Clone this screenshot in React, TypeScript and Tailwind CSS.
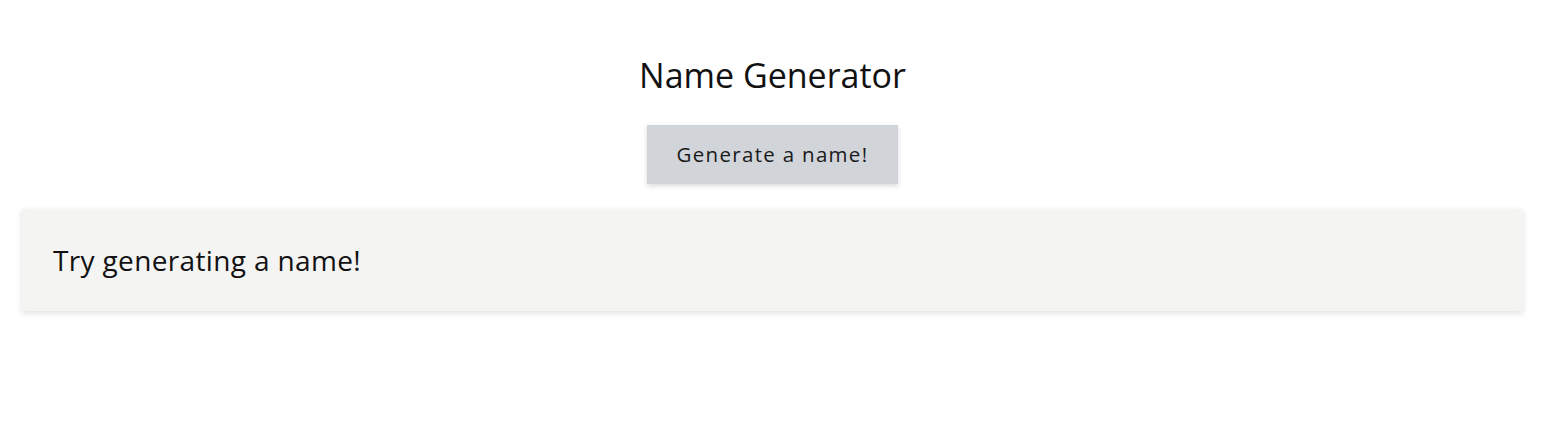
export default function App() {
  return (
    <div className="w-full min-h-[428px] bg-white" style={{ fontFamily: '"Open Sans", sans-serif' }}>
      <div className="mr-[21px] px-[22px] pt-[53px] flex flex-col items-center">
        <h1 className="text-[34px] leading-[44px] text-[#111] font-normal">Name Generator</h1>
        <button className="mt-[28px] w-[251px] h-[59px] bg-[#d1d4d9] text-[20.5px] font-medium tracking-[1.3px] text-[#1a1a1a] shadow-[0_2px_5px_rgba(0,0,0,0.15)]">
          Generate a name!
        </button>
        <div className="mt-[25px] w-full h-[102px] bg-[#f4f4f3] shadow-[0_2px_6px_rgba(0,0,0,0.13)] flex items-center px-[31px]">
          <p className="text-[28px] tracking-[0.35px] text-[#111]">Try generating a name!</p>
        </div>
      </div>
    </div>
  );
}
